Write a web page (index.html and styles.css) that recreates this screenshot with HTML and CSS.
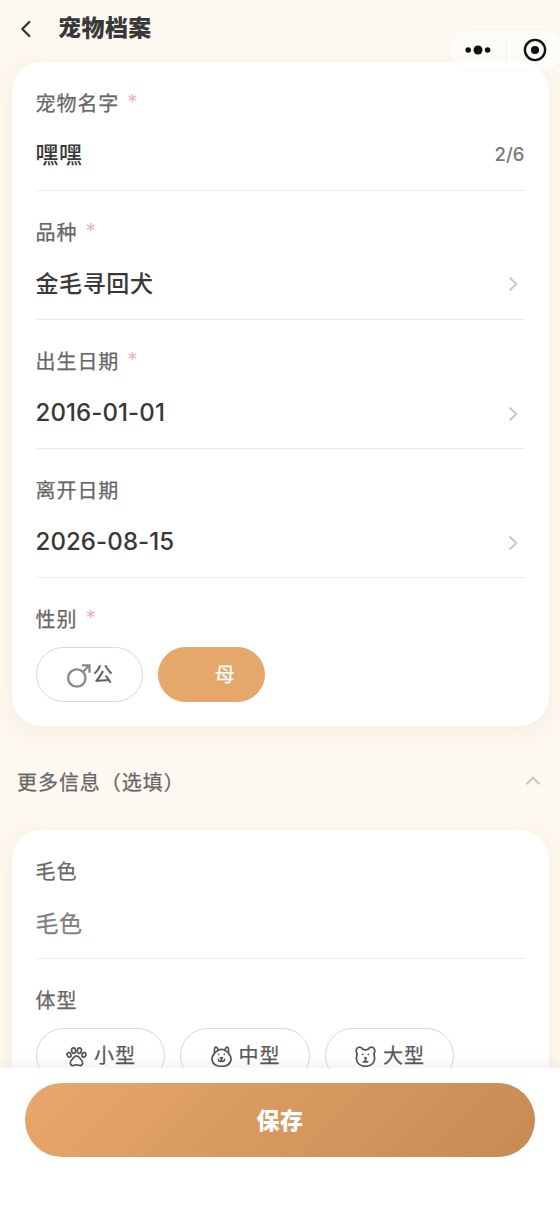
FILE: index.html
```html
<!DOCTYPE html>
<html lang="zh-CN">
<head>
<meta charset="utf-8">
<title>宠物档案</title>
<link rel="stylesheet" href="styles.css">
</head>
<body>
<div class="app">
  <header class="navbar">
    <svg class="back" width="12" height="20" viewBox="0 0 12 20"><path d="M9.3 3 2.3 10 9.3 17"/></svg>
    <h1 class="title">宠物档案</h1>
    <div class="capsule">
      <svg width="28" height="12" viewBox="0 0 28 12"><circle cx="4.2" cy="6" r="2.8"/><circle cx="14" cy="6" r="4.5"/><circle cx="23.6" cy="6" r="2.8"/></svg>
      <span class="capsule-line"></span>
      <svg width="24" height="24" viewBox="0 0 24 24"><circle class="ring" cx="12" cy="12" r="10.1"/><circle cx="12" cy="12" r="4.1"/></svg>
    </div>
  </header>

  <main class="content">
    <section class="card">
      <div class="row">
        <div class="label">宠物名字<span class="star">*</span></div>
        <div class="value">嘿嘿<span class="count">2/6</span></div>
      </div>
      <div class="row">
        <div class="label">品种<span class="star">*</span></div>
        <div class="value">金毛寻回犬<svg class="arrow" width="10" height="16" viewBox="0 0 10 16"><path d="M1.5 1.5 8.3 8 1.5 14.5"/></svg></div>
      </div>
      <div class="row">
        <div class="label">出生日期<span class="star">*</span></div>
        <div class="value date">2016-01-01<svg class="arrow" width="10" height="16" viewBox="0 0 10 16"><path d="M1.5 1.5 8.3 8 1.5 14.5"/></svg></div>
      </div>
      <div class="row">
        <div class="label">离开日期</div>
        <div class="value date">2026-08-15<svg class="arrow" width="10" height="16" viewBox="0 0 10 16"><path d="M1.5 1.5 8.3 8 1.5 14.5"/></svg></div>
      </div>
      <div class="row row-chips">
        <div class="label">性别<span class="star">*</span></div>
        <div class="chips">
          <div class="chip gender"><svg class="male" width="25" height="26" viewBox="0 0 25 26"><circle cx="10.8" cy="16" r="8.7"/><path d="M16.8 10 22.8 4M16 3.4H23.5V10.8"/></svg>公</div>
          <div class="chip gender selected"><span class="icon-slot"></span>母</div>
        </div>
      </div>
    </section>

    <div class="more"><span class="more-text">更多信息<span class="paren-open">（</span>选填<span class="paren-close">）</span></span><svg class="arrow" width="16" height="10" viewBox="0 0 16 10"><path d="M1.5 8.3 8 1.7 14.5 8.3"/></svg></div>

    <section class="card">
      <div class="row">
        <div class="label">毛色</div>
        <div class="value placeholder">毛色</div>
      </div>
      <div class="row row-chips">
        <div class="label">体型</div>
        <div class="chips">
          <div class="chip size"><svg class="pet" width="21" height="21" viewBox="0 0 22 22"><ellipse cx="3.2" cy="9.3" rx="1.9" ry="2.5" transform="rotate(-25 3.2 9.3)"/><ellipse cx="8" cy="4.9" rx="2.1" ry="2.9" transform="rotate(-8 8 4.9)"/><ellipse cx="14" cy="4.9" rx="2.1" ry="2.9" transform="rotate(8 14 4.9)"/><ellipse cx="18.8" cy="9.3" rx="1.9" ry="2.5" transform="rotate(25 18.8 9.3)"/><path d="M11 10.4C8.8 10.4 8 12 7 13.4 5.8 15 4.2 16 4.5 18.3 4.8 20.4 6.9 21 8.6 20.2 10.2 19.5 11.8 19.5 13.4 20.2 15.1 21 17.2 20.4 17.5 18.3 17.8 16 16.2 15 15 13.4 14 12 13.2 10.4 11 10.4Z"/></svg>小型</div>
          <div class="chip size"><svg class="pet" width="21" height="21" viewBox="0 0 22 22"><path d="M3.7 7.5C3.5 5 3.6 1.7 4.6 1.2 5.8 1 7 2.7 7.6 4.2 9.7 3.3 12.3 3.3 14.4 4.2 15 2.7 16.2 1 17.4 1.2 18.4 1.7 18.5 5 18.3 7.5 20.3 10 21.3 12.3 20.9 14.7 20.2 18.7 16.6 21.2 11 21.2S1.8 18.7 1.1 14.7C.7 12.3 1.7 10 3.7 7.5Z"/><path d="M4.2 7 7.4 4.6M17.8 7 14.6 4.6M11 13.3V15M7.8 14.1C7.8 16.5 10.5 16.8 11 15 11.5 16.8 14.2 16.5 14.2 14.1"/><path class="solid" d="M9 11.9Q11 10.8 13 11.9 12.6 13.9 11 14 9.4 13.9 9 11.9Z"/><circle class="solid" cx="8" cy="8.7" r=".9"/><circle class="solid" cx="14" cy="8.7" r=".9"/></svg>中型</div>
          <div class="chip size"><svg class="pet" width="21" height="21" viewBox="0 0 22 22"><path d="M2.3 8.2C.3 5.7 1.3 1.6 4.3 1.2 6 .9 7.3 1.8 8 3.3Q11 4.6 14 3.3C14.7 1.8 16 .9 17.7 1.2 20.7 1.6 21.7 5.7 19.7 8.2 20.2 10 20.7 11.8 20.5 13.7 19.9 18.4 16 21.2 11 21.2S2.1 18.4 1.5 13.7C1.3 11.8 1.8 10 2.3 8.2Z"/><path d="M11 13V16.2M8.8 16.6H13.2"/><path class="solid" d="M9.8 11.4H12.2V13.5H9.8Z"/><circle class="solid" cx="8" cy="8.8" r="1"/><circle class="solid" cx="14" cy="8.8" r="1"/></svg>大型</div>
        </div>
      </div>
    </section>
  </main>

  <footer class="footer">
    <button class="save">保存</button>
  </footer>
</div>
</body>
</html>
```
FILE: styles.css
```css
* { box-sizing: border-box; }
body {
  margin: 0;
  background: #fdf8f0;
  color: #383838;
  font-family: Inter, "Noto Sans CJK SC", sans-serif;
}
.app {
  height: 1217px;
  display: flex;
  flex-direction: column;
  overflow: hidden;
}
.navbar {
  position: relative;
  z-index: 2;
  flex: none;
  height: 62px;
  display: flex;
  align-items: flex-start;
  padding: 13px 0 0 20px;
}
svg { fill: none; flex: none; display: block; }
.back { margin-top: 6px; stroke: #333; stroke-width: 2.3; stroke-linecap: round; stroke-linejoin: round; }
.title { margin: 0 0 0 26px; font-size: 23px; line-height: 31px; font-weight: 800; letter-spacing: .45px; }
.capsule {
  position: absolute;
  left: 449px;
  top: 29px;
  width: 116px;
  height: 42px;
  padding-left: 14px;
  border: 1px solid rgba(0, 0, 0, .03);
  border-radius: 21px;
  background: rgba(255, 255, 255, .6);
  display: flex;
  align-items: center;
}
.capsule svg { fill: #111; }
.capsule .ring { fill: none; stroke: #111; stroke-width: 2.4; }
.capsule-line { width: 1px; height: 28px; margin: 0 16px 0 14px; background: rgba(0, 0, 0, .04); }

.content { flex: 1; min-height: 0; padding: 0 11.5px; }
.card {
  padding: 0 24px;
  border-radius: 30px;
  background: #fff;
  box-shadow: 0 5px 22px rgba(150, 120, 70, .09);
}
.row { height: 129px; padding-top: 26px; border-bottom: 1px solid #ececec; }
.row-chips { height: auto; padding-bottom: 24px; border: 0; }
.label {
  height: 30px;
  line-height: 32px;
  font-size: 20px;
  letter-spacing: .95px;
  color: #666;
  -webkit-text-stroke: .25px currentColor;
  display: flex;
}
.star { margin-left: 9px; line-height: 26px; color: #efb0b0; font-family: "DejaVu Sans", sans-serif; font-size: 17px; }
.value {
  height: 36px;
  margin-top: 17px;
  display: flex;
  align-items: center;
  justify-content: space-between;
  font-size: 23px;
  font-weight: 500;
  letter-spacing: .6px;
}
.date { font-size: 24px; letter-spacing: .1px; padding-top: 2px; }
.count { margin-top: 2px; font-size: 18.5px; color: #777; letter-spacing: 0; }
.placeholder { padding-top: 2px; color: #808080; font-weight: 400; -webkit-text-stroke: .25px currentColor; }
.arrow { stroke: #c8c8c8; stroke-width: 2; }
.value .arrow { margin: 3px 7px 0 0; }
.chips { display: flex; gap: 15px; margin-top: 13px; }
.chip {
  height: 55px;
  padding-left: 1.5px;
  border: 1px solid #d9d9d9;
  border-radius: 28px;
  display: flex;
  align-items: center;
  justify-content: center;
  font-size: 20px;
  line-height: 29px;
  padding-top: 1px;
  letter-spacing: .9px;
  color: #595959;
  -webkit-text-stroke: .25px currentColor;
}
.gender { width: 107px; gap: 2px; }
.selected { background: #e6a76a; border-color: #e6a76a; color: #fff; }
.icon-slot { width: 25px; }
.male { stroke: #888; stroke-width: 2.3; }
.size { width: 129.5px; gap: 7px; }
.pet { margin-top: 1px; stroke: #555; stroke-width: 1.8; stroke-linejoin: round; stroke-linecap: round; }
.pet .solid { fill: #555; stroke: none; }
.more {
  height: 104px;
  padding: 6px 8px 0 5.5px;
  display: flex;
  align-items: center;
  justify-content: space-between;
  font-size: 20px;
  letter-spacing: .95px;
  color: #666;
}
.more-text { -webkit-text-stroke: .25px currentColor; }
.footer {
  position: relative;
  flex: none;
  height: 149px;
  padding: 15px 25px;
  background: #fff;
  box-shadow: 0 -3px 14px rgba(0, 0, 0, .06);
}
.save {
  display: block;
  width: 100%;
  height: 74px;
  padding: 0 0 3px;
  border: 0;
  border-radius: 37px;
  background: linear-gradient(135deg, #e8a76c, #c68a53);
  color: #fff;
  font: 800 23px "Noto Sans CJK SC", sans-serif;
  letter-spacing: .5px;
}
```
